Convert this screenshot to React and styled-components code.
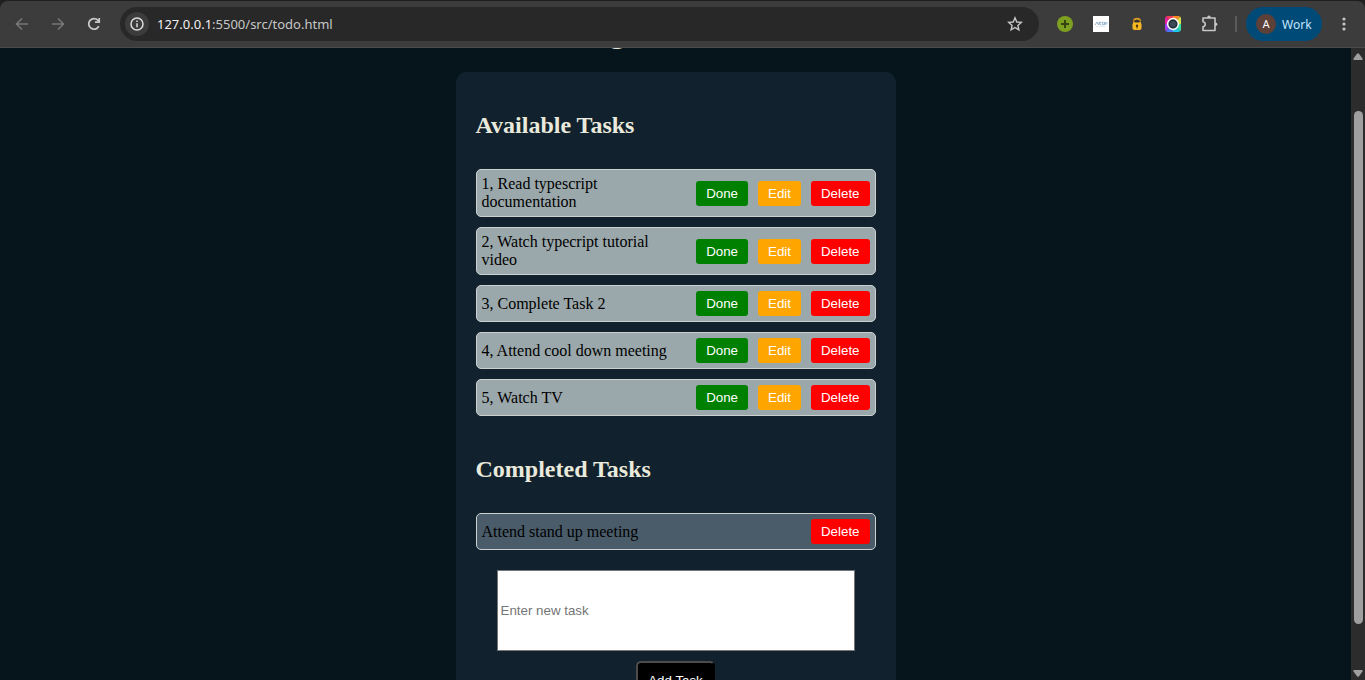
import React from "react";
import styled, { createGlobalStyle } from "styled-components";

const GlobalStyle = createGlobalStyle`
  * { box-sizing: border-box; }
  body {
    margin: 0;
    background: #06141b;
    font-family: "Liberation Serif", "Times New Roman", serif;
    font-size: 16px;
  }
`;

const Window = styled.div`
  display: flex;
  flex-direction: column;
  height: 100vh;
  overflow: hidden;
  background: #1f1f1f;
`;

const Toolbar = styled.header`
  flex: none;
  display: flex;
  align-items: center;
  height: 47px;
  margin-top: 1px;
  padding: 0 12px 0 4px;
  border-bottom: 1px solid #4b4b4b;
  border-radius: 8px 8px 0 0;
  background: #3c3c3c;
  font-family: "Noto Sans", "Open Sans", sans-serif;
`;

const IconButton = styled.button`
  flex: none;
  display: flex;
  align-items: center;
  justify-content: center;
  width: 36px;
  height: 34px;
  padding: 0;
  border: 0;
  background: none;
  color: ${(p) => (p.$dim ? "#777777" : "#c7c7c7")};
`;

const AddressBar = styled.div`
  flex: 1;
  display: flex;
  align-items: center;
  height: 34px;
  margin: 0 8px;
  padding: 0 6px 0 5px;
  border-radius: 17px;
  background: #282828;
`;

const SiteInfo = styled.button`
  flex: none;
  display: flex;
  align-items: center;
  justify-content: center;
  width: 24px;
  height: 24px;
  padding: 0;
  border: 0;
  border-radius: 50%;
  background: #3c3c3c;
  color: #dcdcdc;
`;

const Address = styled.div`
  flex: 1;
  padding-left: 8px;
  color: #c7c7c7;
  font-size: 13px;
  line-height: 20px;

  span { color: #f0f0f0; }
`;

const Separator = styled.div`
  width: 2px;
  height: 16px;
  margin: 0 9px 0 8px;
  background: #5b5b5b;
`;

const Profile = styled.button`
  flex: none;
  display: flex;
  align-items: center;
  gap: 6px;
  width: 76px;
  height: 34px;
  padding: 0 0 0 10px;
  border: 0;
  border-radius: 17px;
  background: #004a77;
  color: #c2e7ff;
  font-family: "Noto Sans", "Open Sans", sans-serif;
  font-size: 12px;
`;

const Avatar = styled.span`
  display: flex;
  align-items: center;
  justify-content: center;
  width: 20px;
  height: 20px;
  border-radius: 50%;
  background: #5d4037;
  color: #ffffff;
  font-family: Roboto, sans-serif;
  font-size: 11px;
`;

const MenuButton = styled(IconButton)`
  width: 20px;
  margin-left: 12px;
  margin-right: -1px;
`;

const Viewport = styled.div`
  flex: 1;
  display: flex;
  min-height: 0;
`;

const Page = styled.main`
  flex: 1;
  display: flex;
  flex-direction: column;
  align-items: center;
  overflow: hidden;
  background: #06141b;
`;

const TitleBand = styled.div`
  flex: none;
  display: flex;
  align-items: flex-end;
  height: 24px;
  padding-bottom: 23px;
  overflow: hidden;
`;

const Title = styled.h1`
  margin: 0;
  color: #e9e9dc;
  font-size: 32px;
  line-height: 36px;
`;

const Card = styled.section`
  flex: none;
  width: 440px;
  max-width: 100%;
  padding: 20px;
  border-radius: 10px;
  background: #11212d;
`;

const Heading = styled.h2`
  margin: 0;
  padding: 20px 0;
  color: #e9e9dc;
  font-size: 24px;
  line-height: 27px;
`;

const TaskList = styled.ul`
  display: flex;
  flex-direction: column;
  gap: 10px;
  margin: 0;
  padding: 10px 0 20px;
  list-style: none;
`;

const Task = styled.li`
  display: flex;
  align-items: center;
  gap: 10px;
  padding: 5px;
  border: 1px solid #ccd0cf;
  border-radius: 5px;
  background: ${(p) => (p.$completed ? "#4a5c6a" : "#9ba8ab")};
  color: #000000;
`;

const TaskText = styled.span`
  flex: 1;
  line-height: 18px;
`;

const ActionButton = styled.button`
  flex: none;
  padding: 5px 10px;
  border: 0;
  border-radius: 3px;
  background: ${(p) => p.$color};
  color: #ffffff;
  font-family: "Liberation Sans", Arial, sans-serif;
  line-height: 15px;
`;

const TaskForm = styled.form`
  display: flex;
  flex-direction: column;
  align-items: center;
  gap: 10px;
`;

const TaskInput = styled.input`
  width: 358px;
  max-width: 100%;
  height: 81px;
  padding: 1px 3px;
  border: 1px solid #767676;
  background: #ffffff;
  font-family: "Liberation Sans", Arial, sans-serif;

  &::placeholder { color: #757575; }
`;

const AddButton = styled.button`
  padding: 10px;
  border: 2px solid;
  border-color: #4c4c4c #000000 #000000 #4c4c4c;
  border-radius: 5px;
  background: #000000;
  color: #ffffff;
  font-family: "Liberation Sans", Arial, sans-serif;
  line-height: 15px;
`;

const Scrollbar = styled.div`
  flex: none;
  display: flex;
  flex-direction: column;
  align-items: center;
  width: 14px;
  padding: 5px 0 3px;
  background: #2c2c2c;
`;

const Thumb = styled.div`
  flex: 513;
  width: 9px;
  border-radius: 5px;
  background: #9f9f9f;
`;

const TrackGap = styled.div`
  flex: ${(p) => p.$size};
`;

const tasks = [
  "Read typescript documentation",
  "Watch typecript tutorial video",
  "Complete Task 2",
  "Attend cool down meeting",
  "Watch TV",
];

const completed = ["Attend stand up meeting"];

const stroke = { fill: "none", stroke: "currentColor", strokeWidth: 1.6 };

export default function App() {
  return (
    <Window>
      <GlobalStyle />
      <Toolbar>
        <IconButton $dim aria-label="Back">
          <svg width="16" height="16" viewBox="0 0 16 16" {...stroke}>
            <path d="M14 8H3M8 2.5L2.5 8L8 13.5" />
          </svg>
        </IconButton>
        <IconButton $dim aria-label="Forward">
          <svg width="16" height="16" viewBox="0 0 16 16" {...stroke}>
            <path d="M2 8H13M8 2.5L13.5 8L8 13.5" />
          </svg>
        </IconButton>
        <IconButton aria-label="Reload">
          <svg width="16" height="16" viewBox="0 0 16 16" fill="none" stroke="currentColor" strokeWidth="1.8">
            <path d="M12.8 10.2A5.3 5.3 0 1 1 12 4.4L13.2 5.8" />
            <path d="M13.2 2V6.2H9" />
          </svg>
        </IconButton>
        <AddressBar>
          <SiteInfo aria-label="Site information">
            <svg width="14" height="14" viewBox="0 0 14 14" fill="none" stroke="currentColor" strokeWidth="1.5">
              <circle cx="7" cy="7" r="6" />
              <path d="M7 6.2V10.2M7 3.6V5.1" />
            </svg>
          </SiteInfo>
          <Address><span>127.0.0.1</span>:5500/src/todo.html</Address>
          <IconButton aria-label="Bookmark this page">
            <svg width="16" height="16" viewBox="0 0 16 16" fill="none" stroke="currentColor" strokeWidth="1.4">
              <path d="M8 1.8L9.8 6L14.3 6.4L10.9 9.4L11.9 13.9L8 11.5L4.1 13.9L5.1 9.4L1.7 6.4L6.2 6Z" />
            </svg>
          </IconButton>
        </AddressBar>
        <IconButton aria-label="Add extension">
          <svg width="16" height="16" viewBox="0 0 16 16">
            <circle cx="8" cy="8" r="8" fill="#7da021" />
            <path d="M8 4V12M4 8H12" stroke="#344411" strokeWidth="2" />
          </svg>
        </IconButton>
        <IconButton aria-label="Arsiv extension">
          <svg width="16" height="16" viewBox="0 0 16 16">
            <path d="M0 0H16V16H0Z" fill="#ffffff" />
            <path d="M2 9L4 6L5.5 9M6 9V6.3H8L6.5 7.7L8.3 9M10.8 6.3H9L10.6 8.8H8.8M11.5 6V9M12 6L13 8.5L14.5 6" fill="none" stroke="#7fa3c4" strokeWidth=".8" />
            <path d="M3 10.5H13" stroke="#d5dfe8" strokeWidth=".6" />
          </svg>
        </IconButton>
        <IconButton aria-label="Lock extension">
          <svg width="16" height="16" viewBox="0 0 16 16">
            <path d="M5 7V5Q5 2.6 8 2.6Q11 2.6 11 5V7" fill="none" stroke="#d99c20" strokeWidth="1.8" />
            <path d="M4.8 4.6H11.2V5.8H4.8Z" fill="#302b2b" />
            <rect x="3.5" y="6.5" width="9" height="7.5" rx="2" fill="#f7b922" />
            <circle cx="8" cy="9.8" r="1.2" fill="#4b3510" />
            <path d="M8 10V12.5" stroke="#4b3510" />
          </svg>
        </IconButton>
        <IconButton aria-label="Camera extension">
          <svg width="16" height="16" viewBox="0 0 16 16">
            <defs>
              <clipPath id="lens"><rect width="16" height="16" rx="3" /></clipPath>
            </defs>
            <g clipPath="url(#lens)">
              <path d="M8 8L0 0H8Z" fill="#f43b5e" />
              <path d="M8 8V0H16Z" fill="#ff8a24" />
              <path d="M8 8L16 0V8Z" fill="#d8e34a" />
              <path d="M8 8H16V16Z" fill="#35e1a4" />
              <path d="M8 8L16 16H8Z" fill="#20c9e8" />
              <path d="M8 8V16H0Z" fill="#4b74f5" />
              <path d="M8 8L0 16V8Z" fill="#a23bf0" />
              <path d="M8 8H0V0Z" fill="#e91ea8" />
            </g>
            <circle cx="8" cy="8" r="5.4" fill="#3c4b56" stroke="#ffffff" strokeWidth="1.5" />
            <circle cx="8" cy="8" r="3.6" fill="none" stroke="#20282e" />
          </svg>
        </IconButton>
        <IconButton aria-label="Extensions">
          <svg width="20" height="20" viewBox="0 0 20 20" fill="none" stroke="currentColor" strokeWidth="1.6" strokeLinejoin="round">
            <path d="M4 4H16V16.5H4V12.8Q6.2 12.4 6.2 10.3Q6.2 8.2 4 7.8Z" />
            <path d="M8.2 4Q8.2 1.6 10 1.6Q11.8 1.6 11.8 4ZM16 8.4Q18.5 8.4 18.5 10.2Q18.5 12 16 12Z" fill="currentColor" stroke="none" />
          </svg>
        </IconButton>
        <Separator />
        <Profile><Avatar>A</Avatar>Work</Profile>
        <MenuButton aria-label="Browser menu">
          <svg width="4" height="16" viewBox="0 0 4 16" fill="currentColor">
            <circle cx="2" cy="3" r="1.6" />
            <circle cx="2" cy="8" r="1.6" />
            <circle cx="2" cy="13" r="1.6" />
          </svg>
        </MenuButton>
      </Toolbar>
      <Viewport>
        <Page>
          <TitleBand><Title>Organize Tasks</Title></TitleBand>
          <Card>
            <Heading>Available Tasks</Heading>
            <TaskList>
              {tasks.map((task, i) => (
                <Task key={task}>
                  <TaskText>{`${i + 1}, ${task}`}</TaskText>
                  <ActionButton $color="#008000">Done</ActionButton>
                  <ActionButton $color="#ffa500">Edit</ActionButton>
                  <ActionButton $color="#ff0000">Delete</ActionButton>
                </Task>
              ))}
            </TaskList>
            <Heading>Completed Tasks</Heading>
            <TaskList>
              {completed.map((task) => (
                <Task key={task} $completed>
                  <TaskText>{task}</TaskText>
                  <ActionButton $color="#ff0000">Delete</ActionButton>
                </Task>
              ))}
            </TaskList>
            <TaskForm onSubmit={(e) => e.preventDefault()}>
              <TaskInput type="text" placeholder="Enter new task" aria-label="New task" />
              <AddButton type="submit">Add Task</AddButton>
            </TaskForm>
          </Card>
        </Page>
        <Scrollbar aria-hidden="true">
          <svg width="10" height="8" viewBox="0 0 10 8" fill="#9f9f9f">
            <path d="M4 .8Q5 -.3 6 .8L9.5 5.5Q10 7 8.8 7H1.2Q0 7 .5 5.5Z" />
          </svg>
          <TrackGap $size={50} />
          <Thumb />
          <TrackGap $size={45} />
          <svg width="10" height="8" viewBox="0 0 10 8" fill="#9f9f9f">
            <path d="M4 7.2Q5 8.3 6 7.2L9.5 2.5Q10 1 8.8 1H1.2Q0 1 .5 2.5Z" />
          </svg>
        </Scrollbar>
      </Viewport>
    </Window>
  );
}
